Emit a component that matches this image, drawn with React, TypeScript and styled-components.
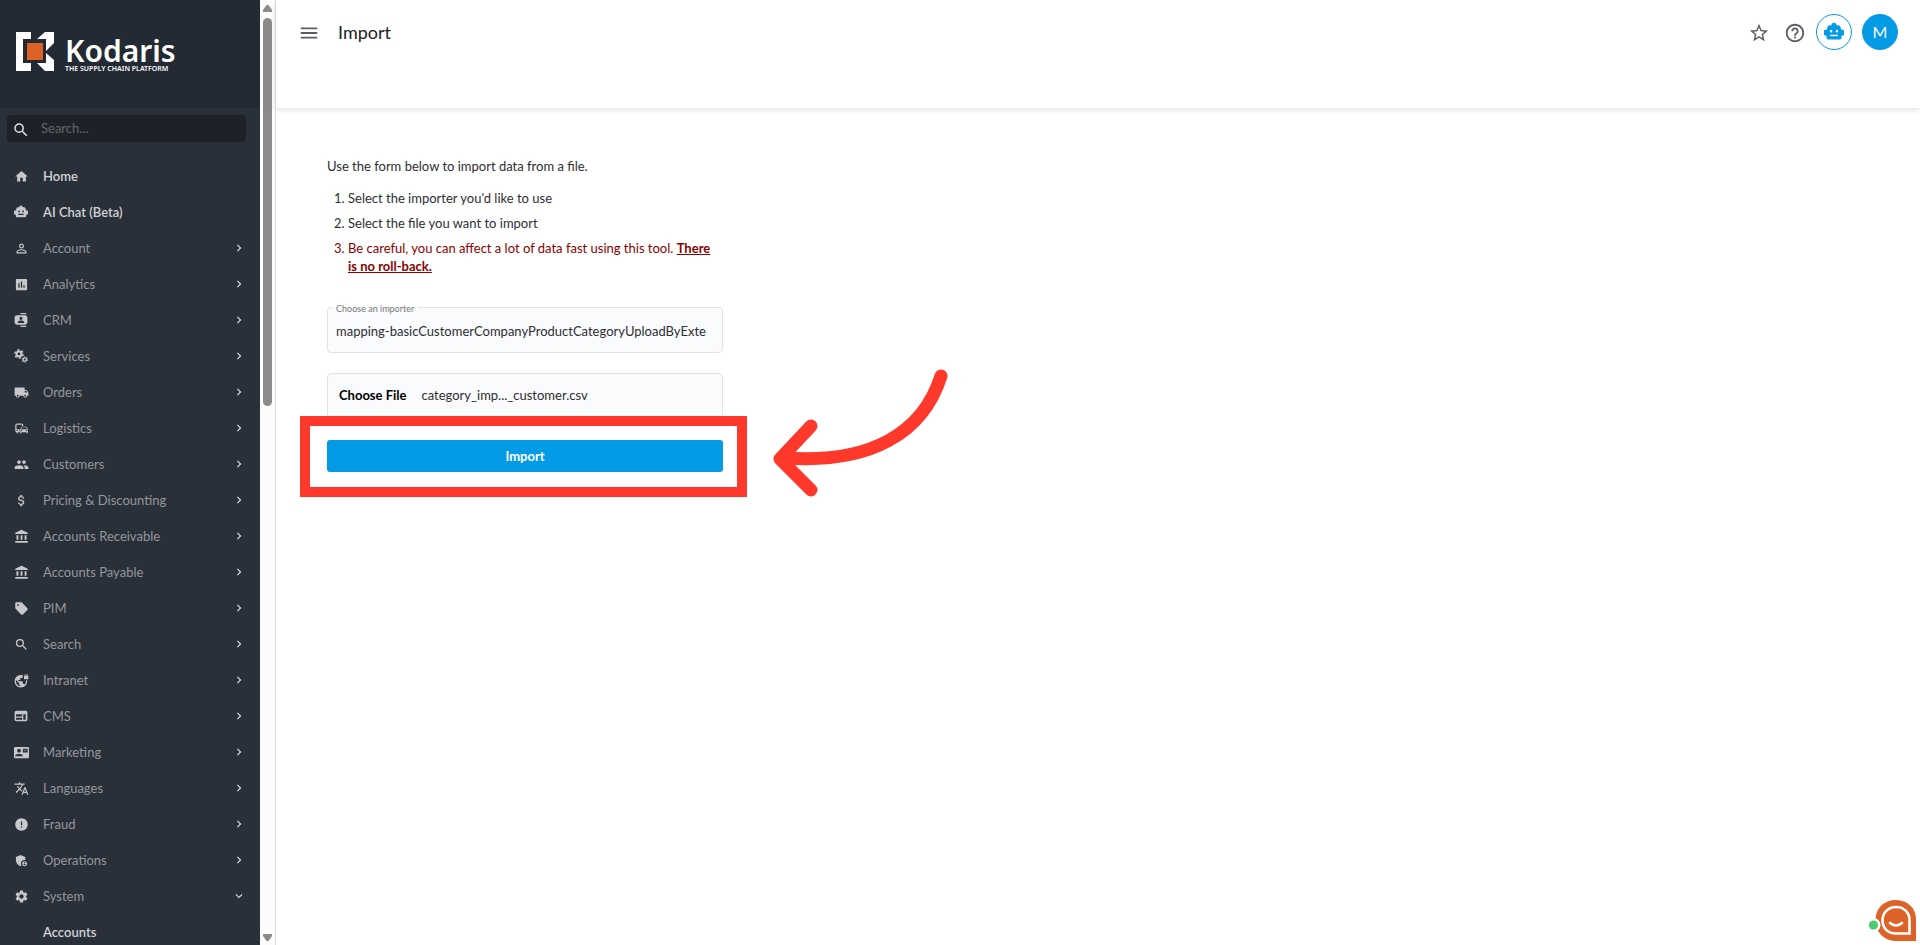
import React from "react";
import styled, { createGlobalStyle, css } from "styled-components";
import {
  MdHome,
  MdPersonOutline,
  MdInsertChart,
  MdLocalShipping,
  MdCommute,
  MdGroup,
  MdAttachMoney,
  MdAccountBalance,
  MdSell,
  MdSearch,
  MdVpnLock,
  MdContactMail,
  MdTranslate,
  MdError,
  MdAdminPanelSettings,
  MdSettings,
  MdChevronRight,
  MdKeyboardArrowDown,
  MdMenu,
  MdStarBorder,
  MdHelpOutline,
} from "react-icons/md";

const colors = {
  brandBar: "#242a33",
  sidebar: "#2a303a",
  searchBox: "#1e2228",
  navText: "#94979b",
  navStrong: "#d0d2d4",
  navIcon: "#c6c8cb",
  blue: "#039be5",
  orange: "#dc6227",
  mark: "#ff382c",
  danger: "#8b0000",
};

const GlobalStyle = createGlobalStyle`
  * { box-sizing: border-box; }
  body {
    margin: 0;
    background: #fff;
    color: #2e2e33;
    font-family: Lato, "Open Sans", sans-serif;
    font-size: 13px;
    line-height: 18px;
  }
  button, input { font: inherit; color: inherit; }
`;

const Shell = styled.div`
  display: flex;
  height: 100vh;
  overflow: hidden;
`;

const Sidebar = styled.aside`
  flex: none;
  width: 260px;
  overflow: hidden;
  background: ${colors.sidebar};
`;

const Brand = styled.a`
  display: flex;
  align-items: center;
  gap: 11px;
  height: 108px;
  padding: 0 16px 6px;
  background: ${colors.brandBar};
  color: #fff;
  text-decoration: none;
  font-family: "Noto Sans", sans-serif;
`;

const BrandText = styled.span`
  display: flex;
  flex-direction: column;
  padding-top: 8px;
`;

const BrandName = styled.span`
  font-size: 30px;
  font-weight: 600;
  line-height: 26px;
`;

const BrandTagline = styled.span`
  font-size: 7px;
  font-weight: 600;
  line-height: 9px;
  white-space: nowrap;
`;

const SearchBox = styled.label`
  display: flex;
  align-items: center;
  gap: 11px;
  height: 27px;
  margin: 7px 14px 16px 7px;
  padding: 0 5px;
  border-radius: 4px;
  background: ${colors.searchBox};
  color: #dcdee0;

  svg { flex: none; margin-top: 3px; }
`;

const SearchInput = styled.input`
  flex: 1;
  min-width: 0;
  padding: 0 0 2px;
  border: 0;
  outline: 0;
  background: none;
  &::placeholder { color: #63676b; opacity: 1; }
`;

const NavList = styled.ul`
  margin: 0;
  padding: 0;
  list-style: none;
`;

const NavLink = styled.a<{ $strong?: boolean }>`
  display: flex;
  align-items: center;
  gap: 14px;
  height: 36px;
  padding: 0 14px;
  color: ${colors.navText};
  text-decoration: none;
  ${(p) => p.$strong && css`color: ${colors.navStrong}; font-weight: 600;`}
`;

const NavIcon = styled.span`
  display: flex;
  flex: none;
  width: 15px;
  color: ${colors.navIcon};
`;

const NavLabel = styled.span`
  flex: 1;
`;

const ScrollTrack = styled.div`
  display: flex;
  flex: none;
  flex-direction: column;
  align-items: center;
  justify-content: space-between;
  width: 16px;
  padding: 5px 0 4px;
  border-right: 1px solid #dedede;
  background: #fcfcfc;
`;

const ScrollThumb = styled.div`
  width: 9px;
  height: 41.5%;
  margin: 6px 0 auto;
  border-radius: 5px;
  background: #8b8b8b;
`;

const Main = styled.main`
  flex: 1;
  min-width: 0;
`;

const TopBar = styled.header`
  display: flex;
  justify-content: space-between;
  align-items: flex-start;
  height: 108px;
  padding: 14px 22px 0;
  box-shadow: 0 2px 6px rgba(0, 0, 0, 0.12);
`;

const Cluster = styled.div<{ $gap: number }>`
  display: flex;
  align-items: center;
  gap: ${(p) => p.$gap}px;
  height: 36px;
`;

const IconButton = styled.button`
  display: flex;
  padding: 2px 0 0;
  border: 0;
  background: none;
  color: #5f5b63;
  cursor: pointer;
`;

const RoundButton = styled.button<{ $filled?: boolean }>`
  display: flex;
  align-items: center;
  justify-content: center;
  width: 36px;
  height: 36px;
  padding: 0;
  border: 1px solid ${colors.blue};
  border-radius: 50%;
  background: ${(p) => (p.$filled ? colors.blue : "#fff")};
  color: ${(p) => (p.$filled ? "#fff" : colors.blue)};
  font-size: 16px;
  cursor: pointer;
`;

const PageTitle = styled.h1`
  margin: 0;
  color: #222;
  font-size: 18px;
  font-weight: 400;
  line-height: 24px;
`;

const Content = styled.section`
  width: 447px;
  padding: 49px 0 0 51px;
`;

const Intro = styled.p`
  margin: 0 0 14px;
`;

const Steps = styled.ol`
  margin: 0 0 25px;
  padding: 0 8px 0 21px;
`;

const Step = styled.li<{ $danger?: boolean }>`
  margin-bottom: 7px;
  ${(p) => p.$danger && css`color: ${colors.danger};`}
`;

const Field = styled.fieldset`
  height: 53px;
  margin: 0 0 20px;
  padding: 0 12px 0 8px;
  border: 1px solid #dfe1e4;
  border-radius: 4px;
  background: #fafbfd;
`;

const FieldLabel = styled.legend`
  margin-left: -4px;
  padding: 4px 4px 0;
  color: #77777c;
  font-size: 9px;
  line-height: 10px;
`;

const FieldInput = styled.input`
  width: 100%;
  height: 34px;
  padding: 0;
  border: 0;
  outline: 0;
  background: none;
`;

const FileField = styled.label`
  display: flex;
  align-items: center;
  gap: 15px;
  height: 45px;
  margin-bottom: 22px;
  padding: 0 11px 2px;
  border: 1px solid #dfe1e4;
  border-radius: 4px;
  background: #fafbfd;
  cursor: pointer;
`;

const HiddenFile = styled.input`
  position: absolute;
  width: 1px;
  height: 1px;
  opacity: 0;
`;

const FileAction = styled.span`
  color: #000;
  font-weight: 700;
`;

const SubmitArea = styled.div`
  position: relative;
`;

const SubmitButton = styled.button`
  display: block;
  width: 100%;
  height: 32px;
  padding: 0;
  border: 0;
  border-radius: 3px;
  background: ${colors.blue};
  color: #fff;
  font-weight: 700;
  cursor: pointer;
`;

const Highlight = styled.div`
  position: absolute;
  inset: -24px -24px -25px -27px;
  border: 10px solid ${colors.mark};
  pointer-events: none;
`;

const Pointer = styled.svg`
  position: absolute;
  left: 446px;
  top: -72px;
  pointer-events: none;
`;

const ChatLauncher = styled.button`
  position: fixed;
  right: 3px;
  bottom: 3px;
  padding: 0;
  border: 0;
  background: none;
  display: flex;
  cursor: pointer;
`;

const Logo = () => (
  <svg width="38" height="39" viewBox="0 0 38 39" aria-hidden="true">
    <path fill="#fff" d="M0 0H15V7H7V31H15V39H0Z M29 0H38V11L30 19V7H21Z M30 21L38 28V39H29L21 31H30Z" />
    <rect x="11" y="11" width="16" height="17" fill={colors.orange} />
  </svg>
);

const Robot = ({ size }: { size: number }) => (
  <svg width={size} height={size} viewBox="0 0 24 24" fill="currentColor" aria-hidden="true">
    <path
      fillRule="evenodd"
      d="M9 4a3 3 0 0 1 6 0h2q2.500 0 3 2.500l.5 2.500H21a3 3 0 0 1 0 7.500V19q0 2-2 2H5q-2 0-2-2v-2.500A3 3 0 0 1 3 9h.5L4 6.500Q4.500 4 7 4ZM8.500 9.500a1.500 1.500 0 1 0 0 3 1.500 1.500 0 0 0 0-3Zm7 0a1.500 1.500 0 1 0 0 3 1.500 1.500 0 0 0 0-3ZM7.500 15.200v2h9v-2Z"
    />
  </svg>
);

const ContactsCard = ({ size }: { size: number }) => (
  <svg width={size} height={size} viewBox="0 0 24 24" fill="currentColor" aria-hidden="true">
    <path
      fillRule="evenodd"
      d="M11 0h10v2H11ZM11 22h10v2H11ZM5 4h14q4 0 4 4v8q0 4-4 4H5q-4 0-4-4V8q0-4 4-4Zm7 2.500a2.700 2.700 0 1 0 0 5.400 2.700 2.700 0 0 0 0-5.400ZM6.500 17h11v-1c0-2-3-3-5.500-3s-5.500 1-5.500 3Z"
    />
  </svg>
);

const Gears = ({ size }: { size: number }) => (
  <svg width={size} height={size} viewBox="0 0 24 24" fill="none" stroke="currentColor" aria-hidden="true">
    <circle cx="8.500" cy="8.500" r="4.200" strokeWidth="3.600" />
    <circle cx="8.500" cy="8.500" r="7" strokeWidth="2.600" strokeDasharray="3.660 3.660" />
    <circle cx="18.500" cy="18" r="2.800" strokeWidth="2.200" />
    <circle cx="18.500" cy="18" r="4.600" strokeWidth="1.800" strokeDasharray="2.400 2.400" />
  </svg>
);

const Layout = ({ size }: { size: number }) => (
  <svg width={size} height={size} viewBox="0 0 24 24" fill="currentColor" aria-hidden="true">
    <path fillRule="evenodd" d="M4 3h16q3 0 3 3v12q0 3-3 3H4q-3 0-3-3V6q0-3 3-3ZM3.500 9v4H14V9Zm0 6v3.500H14V15ZM16 9v9.500h4V9Z" />
  </svg>
);

type Icon = React.ComponentType<{ size: number }>;
type NavEntry = { label: string; icon?: Icon; strong?: boolean; open?: boolean };

const entries: NavEntry[] = [
  { label: "Home", icon: MdHome, strong: true },
  { label: "AI Chat (Beta)", icon: Robot, strong: true },
  { label: "Account", icon: MdPersonOutline },
  { label: "Analytics", icon: MdInsertChart },
  { label: "CRM", icon: ContactsCard },
  { label: "Services", icon: Gears },
  { label: "Orders", icon: MdLocalShipping },
  { label: "Logistics", icon: MdCommute },
  { label: "Customers", icon: MdGroup },
  { label: "Pricing & Discounting", icon: MdAttachMoney },
  { label: "Accounts Receivable", icon: MdAccountBalance },
  { label: "Accounts Payable", icon: MdAccountBalance },
  { label: "PIM", icon: MdSell },
  { label: "Search", icon: MdSearch },
  { label: "Intranet", icon: MdVpnLock },
  { label: "CMS", icon: Layout },
  { label: "Marketing", icon: MdContactMail },
  { label: "Languages", icon: MdTranslate },
  { label: "Fraud", icon: MdError },
  { label: "Operations", icon: MdAdminPanelSettings },
  { label: "System", icon: MdSettings, open: true },
  { label: "Accounts", strong: true },
];

const customIcons: Icon[] = [Robot, ContactsCard, Gears, Layout];

const NavItem = ({ label, icon: Glyph, strong, open }: NavEntry) => (
  <li>
    <NavLink href="#" $strong={strong}>
      <NavIcon>{Glyph && <Glyph size={customIcons.includes(Glyph) ? 14 : 15} />}</NavIcon>
      <NavLabel>{label}</NavLabel>
      {!strong && (open ? <MdKeyboardArrowDown size={14} color="#dcdee0" /> : <MdChevronRight size={14} color="#dcdee0" />)}
    </NavLink>
  </li>
);

const ScrollArrow = ({ down }: { down?: boolean }) => (
  <svg width="9" height="7" viewBox="0 0 9 7" aria-hidden="true">
    <path fill="#8b8b8b" d={down ? "M0 0H9V2L5.500 7H3.500L0 2Z" : "M0 7H9V5L5.500 0H3.500L0 5Z"} />
  </svg>
);

export default function App() {
  return (
    <>
      <GlobalStyle />
      <Shell>
        <Sidebar>
          <Brand href="#">
            <Logo />
            <BrandText>
              <BrandName>Kodaris</BrandName>
              <BrandTagline>THE SUPPLY CHAIN PLATFORM</BrandTagline>
            </BrandText>
          </Brand>
          <SearchBox>
            <MdSearch size={18} />
            <SearchInput type="search" placeholder="Search..." aria-label="Search" />
          </SearchBox>
          <nav>
            <NavList>
              {entries.map((entry) => (
                <NavItem key={entry.label} {...entry} />
              ))}
            </NavList>
          </nav>
        </Sidebar>
        <ScrollTrack>
          <ScrollArrow />
          <ScrollThumb />
          <ScrollArrow down />
        </ScrollTrack>
        <Main>
          <TopBar>
            <Cluster $gap={18}>
              <IconButton aria-label="Toggle menu">
                <MdMenu size={22} />
              </IconButton>
              <PageTitle>Import</PageTitle>
            </Cluster>
            <Cluster $gap={10}>
              <Cluster $gap={14}>
                <IconButton aria-label="Favourite">
                  <MdStarBorder size={22} />
                </IconButton>
                <IconButton aria-label="Help">
                  <MdHelpOutline size={22} />
                </IconButton>
              </Cluster>
              <RoundButton aria-label="Assistant">
                <Robot size={20} />
              </RoundButton>
              <RoundButton $filled>M</RoundButton>
            </Cluster>
          </TopBar>
          <Content>
            <Intro>Use the form below to import data from a file.</Intro>
            <Steps>
              <Step>Select the importer you'd like to use</Step>
              <Step>Select the file you want to import</Step>
              <Step $danger>
                Be careful, you can affect a lot of data fast using this tool.{" "}
                <strong>
                  <u>There is no roll-back.</u>
                </strong>
              </Step>
            </Steps>
            <form onSubmit={(event) => event.preventDefault()}>
              <Field>
                <FieldLabel>
                  <label htmlFor="importer">Choose an importer</label>
                </FieldLabel>
                <FieldInput
                  id="importer"
                  type="text"
                  defaultValue="mapping-basicCustomerCompanyProductCategoryUploadByExte"
                />
              </Field>
              <FileField>
                <HiddenFile type="file" />
                <FileAction>Choose File</FileAction>
                <span>category_imp..._customer.csv</span>
              </FileField>
              <SubmitArea>
                <SubmitButton type="submit">Import</SubmitButton>
                <Highlight />
                <Pointer width="176" height="130" viewBox="0 0 176 130" aria-hidden="true">
                  <g fill="none" stroke={colors.mark} strokeWidth="13" strokeLinecap="round" strokeLinejoin="round">
                    <path d="M168 8C150 65 98 96 12 90" />
                    <path d="M38 58L7 91L38 122" />
                  </g>
                </Pointer>
              </SubmitArea>
            </form>
          </Content>
        </Main>
        <ChatLauncher aria-label="Open chat">
          <svg width="49" height="43" viewBox="0 0 49 43" aria-hidden="true">
            <path fill={colors.orange} d="M28 1C39.500 1 48 9.500 48 20V42H28C16 42 7.500 33 7.500 21S16 1 28 1Z" />
            <path fill="none" stroke="#fff" strokeWidth="2.600" d="M28 8C36.500 8 41.500 14 41.500 21V34.500H28C20 34.500 14.500 29 14.500 21.500S20 8 28 8Z" />
            <path fill="none" stroke="#fff" strokeWidth="2.600" strokeLinecap="round" d="M22 24Q28 29 34 24" />
            <circle cx="5.500" cy="26" r="7" fill="#fff" />
            <circle cx="5.500" cy="26" r="4.600" fill="#4bcb6b" />
          </svg>
        </ChatLauncher>
      </Shell>
    </>
  );
}
